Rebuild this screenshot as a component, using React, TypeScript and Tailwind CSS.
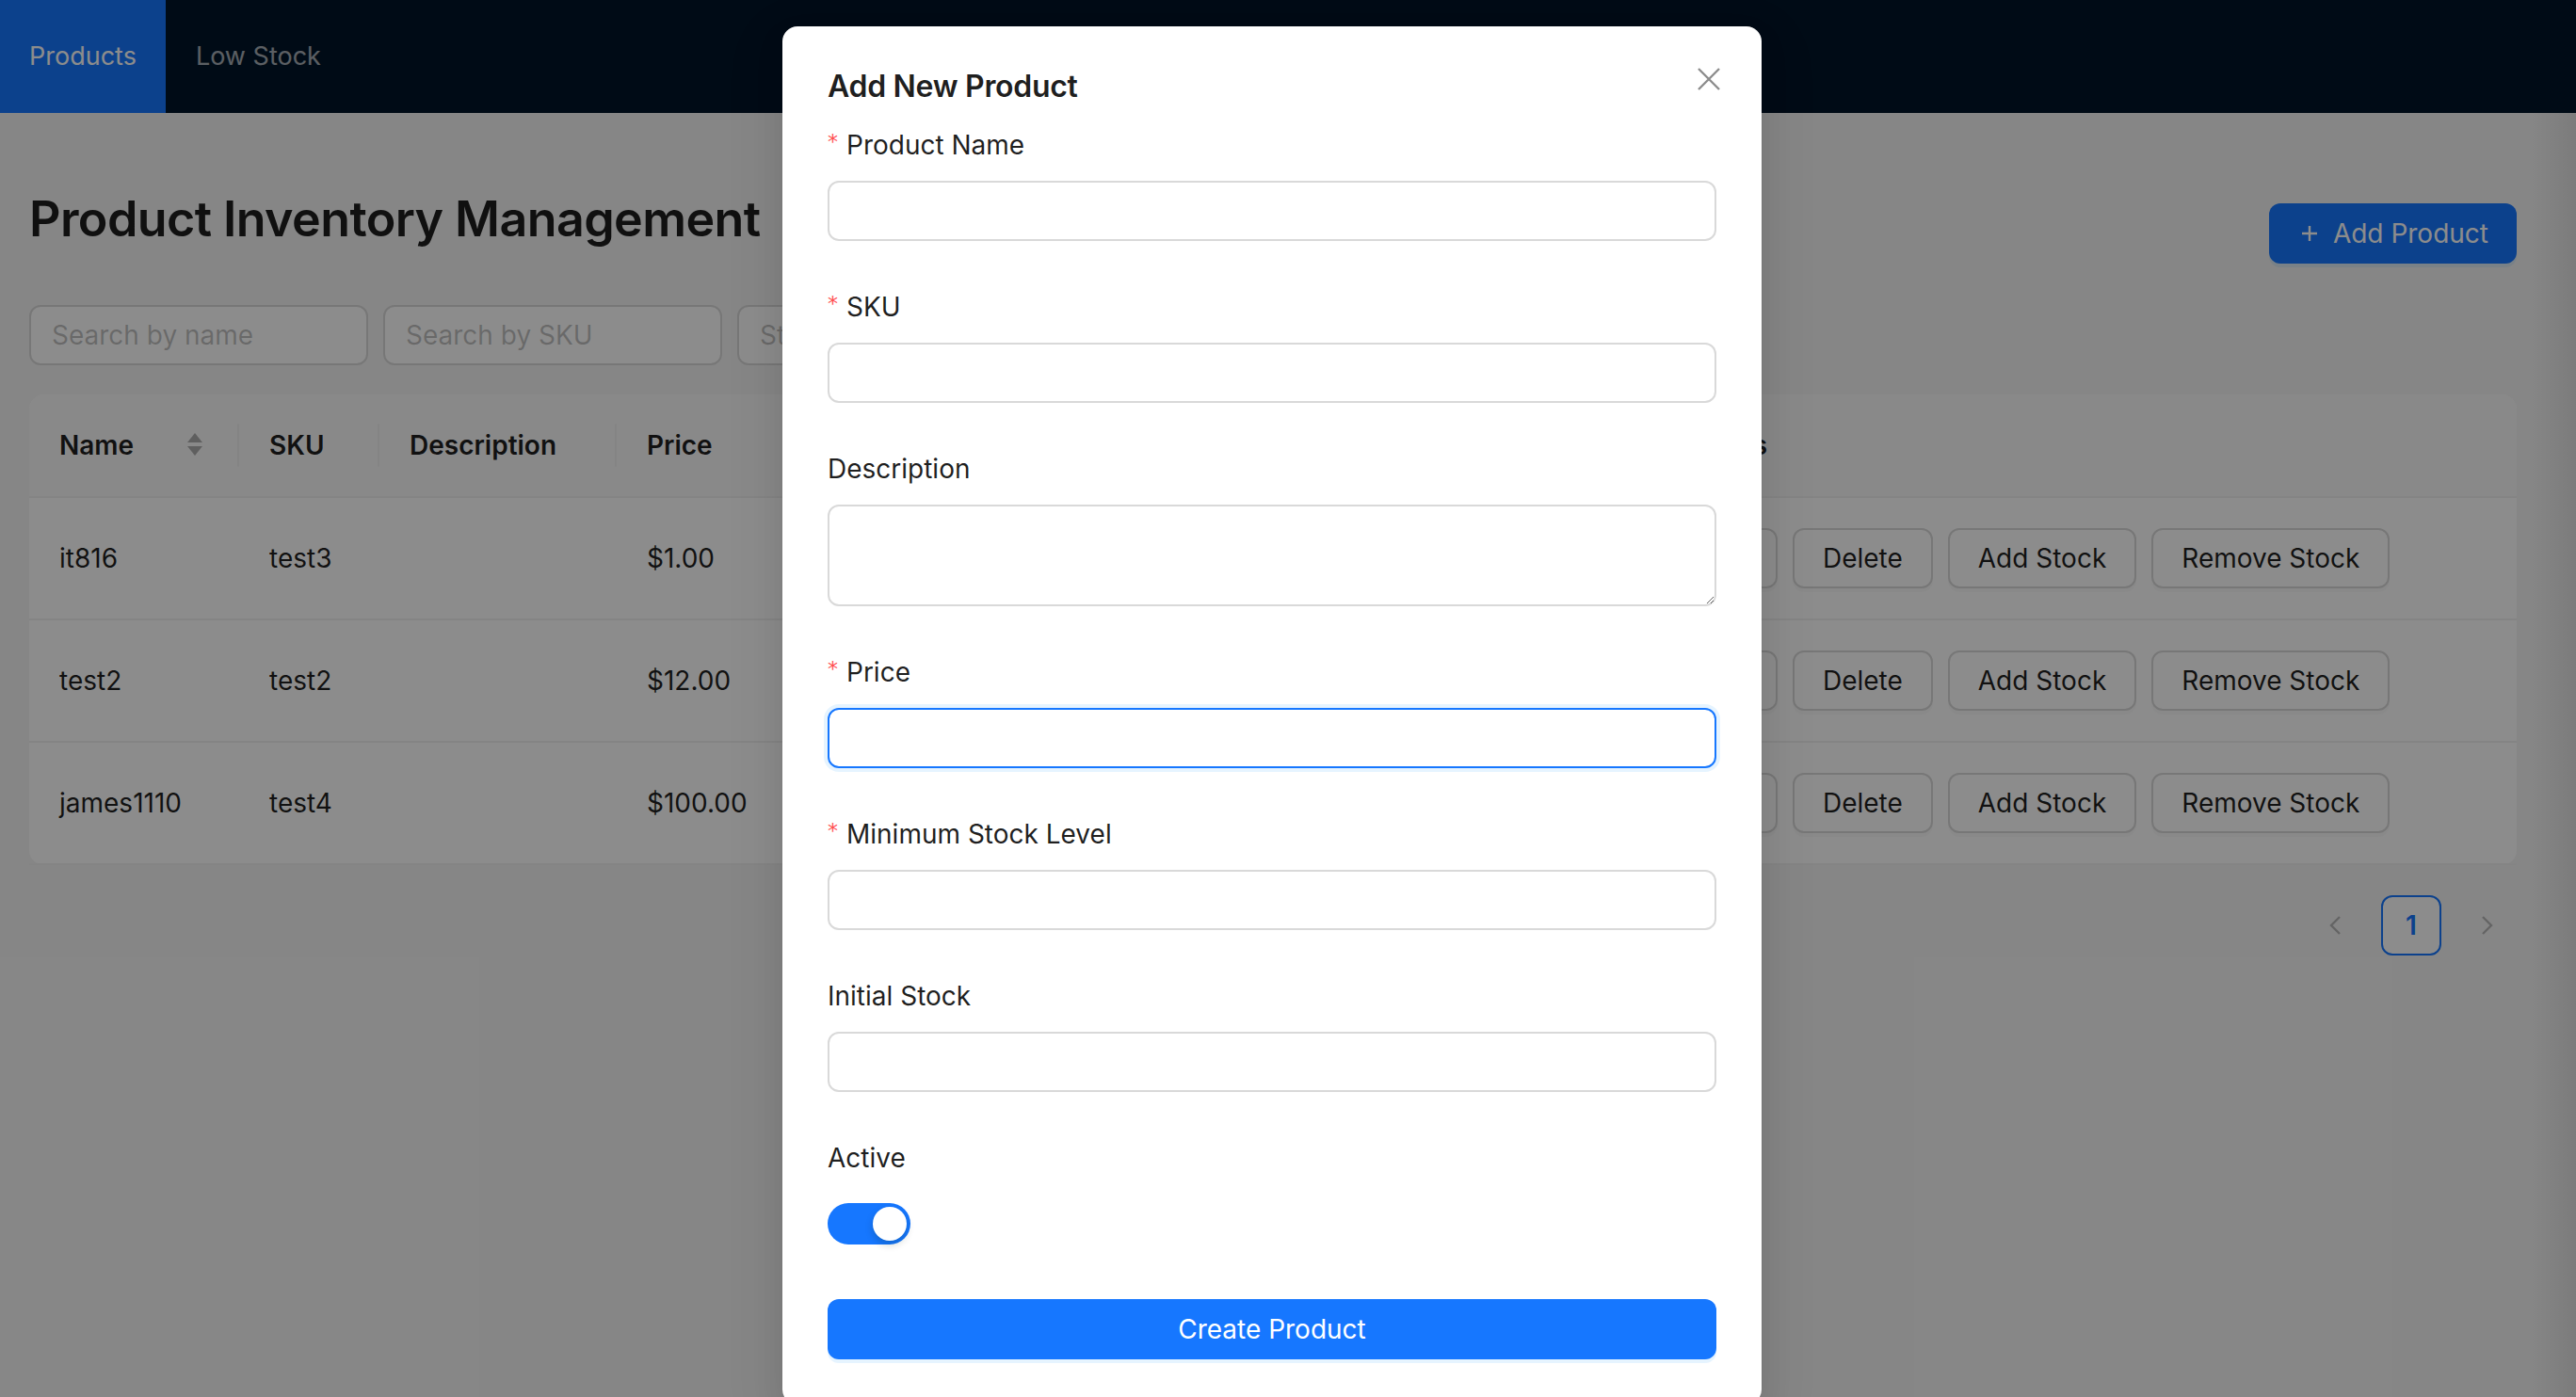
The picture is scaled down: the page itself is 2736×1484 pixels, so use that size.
import React from "react"

const products = [
  { name: "it816", sku: "test3", price: "$1.00", stock: "25", min: "5" },
  { name: "test2", sku: "test2", price: "$12.00", stock: "40", min: "10" },
  { name: "james1110", sku: "test4", price: "$100.00", stock: "8", min: "2" },
]

function Btn({ children }: { children: React.ReactNode }) {
  return (
    <button className="h-[64px] shrink-0 whitespace-nowrap rounded-[12px] border-2 border-[#d9d9d9] bg-white px-[30px] text-[28px] leading-[44px] text-black/88 shadow-[0_4px_0_rgba(0,0,0,0.02)]">
      {children}
    </button>
  )
}

function HeadCell({ children, last }: { children: React.ReactNode; last?: boolean }) {
  return (
    <th className="relative whitespace-nowrap border-b-2 border-[#f0f0f0] bg-[#fafafa] px-[32px] py-[32px] text-left text-[28px] font-semibold leading-[44px] text-black/88">
      {children}
      {!last && <span className="absolute right-0 top-1/2 h-[45px] w-[2px] -translate-y-1/2 bg-[#f0f0f0]" />}
    </th>
  )
}

function FormItem({ label, required, children }: { label: string; required?: boolean; children: React.ReactNode }) {
  return (
    <div className="mb-[48px]">
      <div className="flex items-center pb-[16px] text-[28px] leading-[44px] text-black/88">
        {required && (
          <span className="mr-[8px] inline-block w-[12px] -translate-y-[3px] font-['DejaVu_Sans',sans-serif] text-[22px] leading-none text-[#ff4d4f]">*</span>
        )}
        {label}
      </div>
      {children}
    </div>
  )
}

function TextInput({ focused }: { focused?: boolean }) {
  return (
    <input
      readOnly
      className={
        focused
          ? "block h-[64px] w-full rounded-[12px] border-2 border-[#1677ff] bg-white px-[22px] text-[28px] shadow-[0_0_0_4px_rgba(5,145,255,0.1)] outline-none"
          : "block h-[64px] w-full rounded-[12px] border-2 border-[#d9d9d9] bg-white px-[22px] text-[28px] outline-none"
      }
    />
  )
}

export default function App() {
  return (
    <div className="relative h-[1484px] w-[2736px] overflow-hidden bg-[#f5f5f5] font-['Inter','Liberation_Sans',sans-serif]">
      <header className="flex h-[120px] bg-[#001529] text-[27px]">
        <div className="flex items-center bg-[#1677ff] px-[31px] text-white">Products</div>
        <div className="flex items-center px-[32px] text-white/65">Low Stock</div>
      </header>

      <main className="pl-[31px] pr-[63px] pt-[72px]">
        <div className="flex items-center justify-between">
          <h2 className="mb-[30px] whitespace-nowrap text-[52px] font-semibold leading-[81px] tracking-[-0.6px] text-black/88">
            Product Inventory Management
          </h2>
          <button className="flex h-[64px] items-center gap-[12px] whitespace-nowrap rounded-[12px] bg-[#1677ff] px-[30px] text-[28px] text-white shadow-[0_4px_0_rgba(5,145,255,0.1)]">
            <svg width="26" height="26" viewBox="0 0 26 26" fill="none" stroke="currentColor" strokeWidth="2.4">
              <path d="M13 5v16M5 13h16" />
            </svg>
            Add Product
          </button>
        </div>

        <div className="mt-[21px] flex gap-[16px]">
          <input readOnly placeholder="Search by name" className="h-[64px] w-[360px] rounded-[12px] border-2 border-[#d9d9d9] bg-white px-[22px] text-[28px] outline-none placeholder:text-black/25" />
          <input readOnly placeholder="Search by SKU" className="h-[64px] w-[360px] rounded-[12px] border-2 border-[#d9d9d9] bg-white px-[22px] text-[28px] outline-none placeholder:text-black/25" />
          <div className="flex h-[64px] w-[360px] items-center rounded-[12px] border-2 border-[#d9d9d9] bg-white px-[22px] text-[28px] text-black/25">
            Status
          </div>
        </div>

        <div className="mt-[31px] rounded-[16px] bg-white">
          <table className="w-full table-fixed border-collapse">
            <colgroup>
              <col className="w-[223px]" />
              <col className="w-[149px]" />
              <col className="w-[252px]" />
              <col className="w-[260px]" />
              <col className="w-[250px]" />
              <col className="w-[300px]" />
              <col className="w-[277px]" />
              <col />
            </colgroup>
            <thead>
              <tr>
                <th className="relative rounded-tl-[16px] border-b-2 border-[#f0f0f0] bg-[#fafafa] px-[32px] py-[32px] text-left text-[28px] font-semibold leading-[44px] text-black/88">
                  <div className="flex h-[44px] items-center justify-between">
                    <span>Name</span>
                    <svg width="18" height="28" viewBox="0 0 18 28" className="mr-[6px] text-black/30" fill="currentColor">
                      <path d="M9 1 L17 11 L1 11 Z" />
                      <path d="M1 15 L17 15 L9 25 Z" />
                    </svg>
                  </div>
                  <span className="absolute right-0 top-1/2 h-[45px] w-[2px] -translate-y-1/2 bg-[#f0f0f0]" />
                </th>
                <HeadCell>SKU</HeadCell>
                <HeadCell>Description</HeadCell>
                <HeadCell>Price</HeadCell>
                <HeadCell>Stock</HeadCell>
                <HeadCell>Min Stock</HeadCell>
                <HeadCell>Status</HeadCell>
                <th className="whitespace-nowrap rounded-tr-[16px] border-b-2 border-[#f0f0f0] bg-[#fafafa] px-[32px] py-[32px] text-left text-[28px] font-semibold leading-[44px] text-black/88">
                  Actions
                </th>
              </tr>
            </thead>
            <tbody className="text-[28px] text-black/88">
              {products.map((p) => (
                <tr key={p.name}>
                  <td className="border-b-2 border-[#f0f0f0] px-[32px] py-[32px]">{p.name}</td>
                  <td className="border-b-2 border-[#f0f0f0] px-[32px] py-[32px]">{p.sku}</td>
                  <td className="border-b-2 border-[#f0f0f0] px-[32px] py-[32px]"></td>
                  <td className="border-b-2 border-[#f0f0f0] px-[32px] py-[32px]">{p.price}</td>
                  <td className="border-b-2 border-[#f0f0f0] px-[32px] py-[32px]">{p.stock}</td>
                  <td className="border-b-2 border-[#f0f0f0] px-[32px] py-[32px]">{p.min}</td>
                  <td className="border-b-2 border-[#f0f0f0] px-[32px] py-[32px]">
                    <span className="rounded-[8px] border-2 border-[#b7eb8f] bg-[#f6ffed] px-[14px] py-[2px] text-[24px] text-[#389e0d]">Active</span>
                  </td>
                  <td className="border-b-2 border-[#f0f0f0] px-[32px] py-[32px]">
                    <div className="flex gap-[16px]">
                      <Btn>Edit</Btn>
                      <Btn>Delete</Btn>
                      <Btn>Add Stock</Btn>
                      <Btn>Remove Stock</Btn>
                    </div>
                  </td>
                </tr>
              ))}
            </tbody>
          </table>
        </div>

        <div className="mt-[32px] flex justify-end gap-[16px]">
          <div className="flex h-[64px] w-[64px] items-center justify-center text-black/25">
            <svg width="20" height="24" viewBox="0 0 20 24" fill="none" stroke="currentColor" strokeWidth="2.4">
              <path d="M14 3 L5 12 L14 21" />
            </svg>
          </div>
          <div className="flex h-[64px] w-[64px] items-center justify-center rounded-[12px] border-2 border-[#1677ff] bg-white text-[28px] font-semibold text-[#1677ff]">
            1
          </div>
          <div className="flex h-[64px] w-[64px] items-center justify-center text-black/25">
            <svg width="20" height="24" viewBox="0 0 20 24" fill="none" stroke="currentColor" strokeWidth="2.4">
              <path d="M6 3 L15 12 L6 21" />
            </svg>
          </div>
        </div>
      </main>

      {/* modal mask */}
      <div className="absolute inset-0 bg-black/45" />
      <div className="absolute right-0 top-[120px] h-full w-[48px] bg-gradient-to-r from-transparent to-black/8" />

      {/* modal */}
      <div className="absolute left-[831px] top-[28px] w-[1040px] rounded-[16px] bg-white px-[48px] pt-[40px] shadow-[0_12px_32px_0_rgba(0,0,0,0.08),0_6px_12px_-8px_rgba(0,0,0,0.12),0_18px_56px_16px_rgba(0,0,0,0.05)]">
        <button className="absolute right-[34px] top-[34px] flex h-[44px] w-[44px] items-center justify-center text-black/45">
          <svg width="26" height="26" viewBox="0 0 26 26" fill="none" stroke="currentColor" strokeWidth="2.4">
            <path d="M2 2 L24 24 M24 2 L2 24" />
          </svg>
        </button>
        <div className="mb-[16px] text-[32px] font-semibold leading-[48px] tracking-[-0.3px] text-black/88">Add New Product</div>

        <FormItem label="Product Name" required>
          <TextInput />
        </FormItem>
        <FormItem label="SKU" required>
          <TextInput />
        </FormItem>
        <FormItem label="Description">
          <textarea readOnly className="block h-[108px] w-full resize-y rounded-[12px] border-2 border-[#d9d9d9] bg-white px-[22px] py-[8px] text-[28px] outline-none" />
        </FormItem>
        <FormItem label="Price" required>
          <TextInput focused />
        </FormItem>
        <FormItem label="Minimum Stock Level" required>
          <TextInput />
        </FormItem>
        <FormItem label="Initial Stock">
          <TextInput />
        </FormItem>
        <FormItem label="Active">
          <div className="flex h-[64px] items-center">
            <div className="flex h-[44px] w-[88px] items-center justify-end rounded-full bg-[#1677ff] p-[4px]">
              <div className="h-[36px] w-[36px] rounded-full bg-white shadow-[0_4px_8px_0_rgba(0,35,11,0.2)]" />
            </div>
          </div>
        </FormItem>
        <div className="mb-[48px]">
          <button className="h-[64px] w-full rounded-[12px] bg-[#1677ff] text-[28px] text-white shadow-[0_4px_0_rgba(5,145,255,0.1)]">
            Create Product
          </button>
        </div>
      </div>
    </div>
  )
}
